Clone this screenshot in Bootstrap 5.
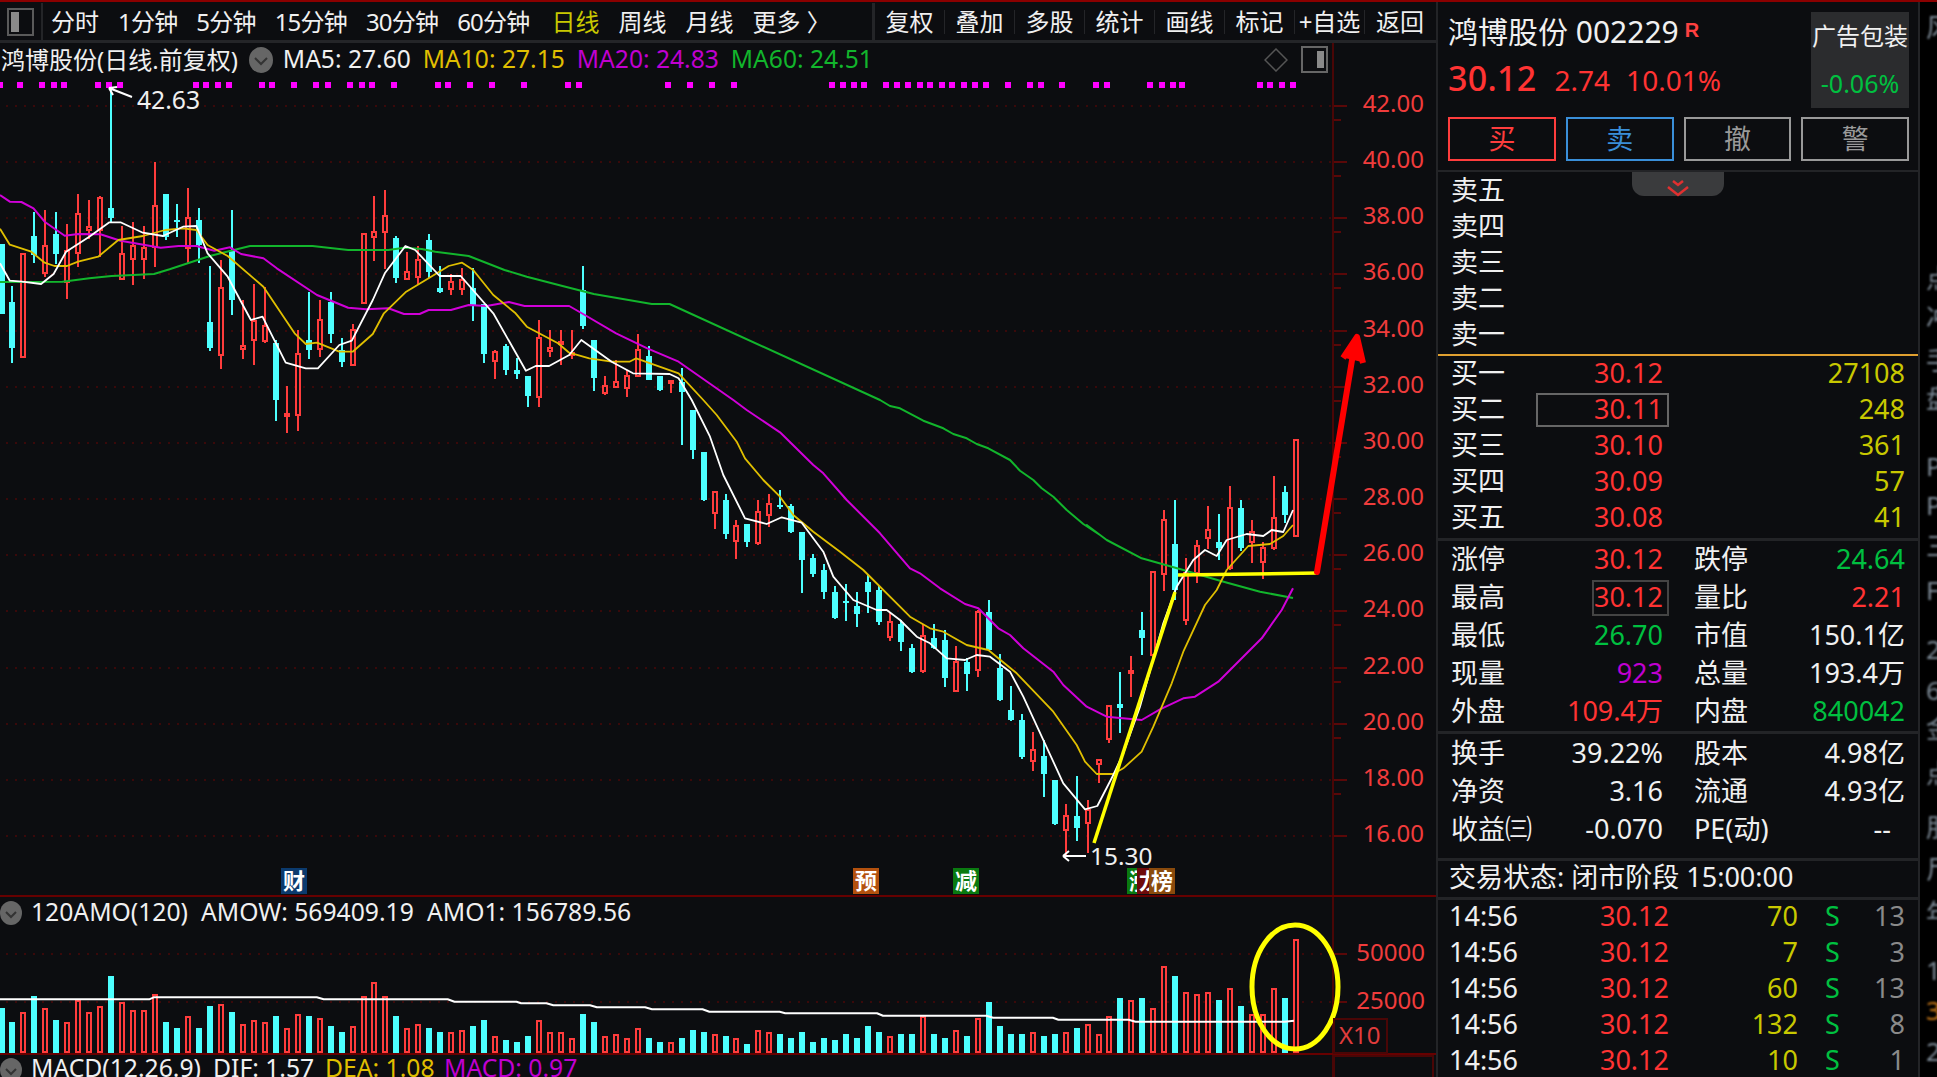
<!DOCTYPE html>
<html lang="zh">
<head>
<meta charset="utf-8">
<title>鸿博股份</title>
<link href="https://cdn.jsdelivr.net/npm/bootstrap@5.3.0/dist/css/bootstrap.min.css" rel="stylesheet">
<style>
html,body{margin:0;height:100%;background:#000;overflow:hidden}
body{font-family:"Noto Sans","Noto Sans CJK SC",sans-serif;color:#f0f0f0;font-size:24px;line-height:1}
.cjk-stage{width:1937px;height:1077px}
.topline{height:2px;background:#8b0000}
.left-pane{width:1436px;background:#0c0d10}
.right-pane{width:484px;background:#0c0d10;border-left:2px solid #232427;border-right:2px solid #232427}
.right-pane>*{flex:none}
.edge-strip{width:17px;background:#000;overflow:hidden;position:relative}
.edge-strip span{position:absolute;left:6px;font-size:26px;line-height:30px;color:#7d8a96;white-space:nowrap;filter:blur(.8px)}
.toolbar{height:41px;border-bottom:3px solid #242528;background:#0c0d10;padding-top:1px}
.tool-icon{width:43px;border-right:2px solid #242528;flex:none}
.tool-list{width:832px;flex:none;border-right:3px solid #242528;padding-left:8px}
.tool-list span{flex:none}
.tool-list .digit-item{letter-spacing:-.8px}
.tool-list .after-digits{margin-left:3px}
.tool-cell{width:70px;flex:none;border-right:1px solid #242528;text-align:center;white-space:nowrap}
.c-yellow{color:#c8c800}
.c-red{color:#ff3333}
.c-green{color:#00c040}
.c-mag{color:#c000d0}
.c-gold{color:#e0bf00}
.c-ma60{color:#12b52c}
.c-gray{color:#8a8a8a}
.infobar{height:33px;white-space:nowrap}
.info-inner{width:1334px;padding-left:1px;border-right:2px solid #4a0606}
.info-inner .tag{margin-right:12px;font-size:24.6px}
.chev{width:24px;height:26px;flex:none;margin:0 10px 0 11px}
.info-tools{gap:13px;padding-right:4px}
.stage-svg{display:block;width:1436px;height:1001px}
.stage-svg .hard{shape-rendering:crispEdges}
.stock-head{height:115px;padding:11px 0 0 10px;position:relative}
.stock-name{font-size:30px;line-height:34px;white-space:nowrap}
.stock-name b{font-size:20px;color:#ff4040;vertical-align:6px;margin-left:6px;font-family:"Liberation Sans",sans-serif}
.stock-price{margin-top:10px;line-height:38px;white-space:nowrap}
.price-big{font-size:34px;color:#ff3333;font-weight:500;margin-right:18px;letter-spacing:.3px}
.price-mid{font-size:28px;color:#ff3333;margin-right:16px}
.ad-box{position:absolute;right:9px;top:10px;width:98px;height:96px;background:#2b2c2e;text-align:center;padding-top:12px;white-space:nowrap;font-size:24px}
.ad-box div+div{margin-top:23px;font-size:25px}
.act-row{height:55px;padding:0 9px 0 10px;gap:10px;border-bottom:2px solid #232427}
.act-btn{width:108px;height:44px;border:2px solid #999;color:#999;background:transparent;font-size:27px;line-height:38px;text-align:center;border-radius:0;padding:0}
.act-btn.is-buy{border-color:#ff3d3d;color:#ff3d3d}
.act-btn.is-sell{border-color:#3a8fd9;color:#3a8fd9}
.ask-block{height:184px;border-bottom:2px solid #e0a030;padding-left:13px;position:relative}
.ask-row{height:36px;line-height:36px;font-size:27px}
.ask-tab{position:absolute;left:194px;top:0;width:92px;height:24px;background:#3a3b3d;border-radius:0 0 12px 12px;text-align:center}
.bid-block{height:185px;border-bottom:3px solid #232427;padding:0 13px 0 13px}
.bid-stack{margin-top:-1px}
.bid-line{display:grid;grid-template-columns:72px 140px 1fr;height:36px;line-height:36px;font-size:27px}
.bid-line>:nth-child(2),.bid-line>:nth-child(3){text-align:right}
.val-box{position:relative}
.val-box::after{content:"";position:absolute;border:2px solid #666;left:-2px;right:-6px;top:2px;bottom:0;pointer-events:none}
.val-box.wide::after{left:13px}
.stat-block{border-bottom:3px solid #232427;padding:0 13px 0 13px}
.stat-line{display:grid;grid-template-columns:72px 140px 31px 70px 1fr;height:38px;line-height:38px;font-size:27px}
.stat-line>:nth-child(2),.stat-line>:nth-child(5){text-align:right;white-space:nowrap}
.stat-line>:nth-child(1),.stat-line>:nth-child(4){white-space:nowrap}
.stat-a{height:193px}
.stat-stack{margin-top:-1px}
.stat-b{height:127px}
.status-bar{height:39px;line-height:32px;padding-left:11px;font-size:27px;border-bottom:3px solid #232427;white-space:nowrap}
.tick-wrap{margin-top:-2px}
.tick-line{display:grid;grid-template-columns:93px 127px 129px 43px 1fr;height:36px;line-height:36px;font-size:27px;padding:0 13px 0 11px}
.tick-line>:nth-child(2),.tick-line>:nth-child(3),.tick-line>:nth-child(5){text-align:right}
.tick-line>:nth-child(4){padding-left:27px}
.hl-box::after{border-color:#444}
.tiny-tile{font-family:"Noto Sans CJK SC",sans-serif;font-size:22px;fill:#fff;font-weight:700}
</style>
</head>
<body>
<div class="cjk-stage d-flex flex-column">
  <div class="topline"></div>
  <div class="d-flex flex-grow-1 overflow-hidden">
    <div class="left-pane flex-none">
      <div class="toolbar d-flex">
        <div class="tool-icon d-flex align-items-center justify-content-center">
          <svg width="27" height="28" viewBox="0 0 27 28"><rect x="1" y="1" width="25" height="26" fill="none" stroke="#5a5a5a" stroke-width="2"/><rect x="4" y="4" width="8" height="20" fill="#8a8a8a"/></svg>
        </div>
        <div class="tool-list d-flex align-items-center" style="gap:19px">
          <span>分时</span><span class="digit-item">1分钟</span><span class="digit-item">5分钟</span><span class="digit-item">15分钟</span><span class="digit-item">30分钟</span><span class="digit-item">60分钟</span><span class="c-yellow after-digits">日线</span><span>周线</span><span>月线</span><span>更多 〉</span>
        </div>
        <div class="d-flex">
          <div class="tool-cell align-self-center">复权</div><div class="tool-cell align-self-center">叠加</div><div class="tool-cell align-self-center">多股</div><div class="tool-cell align-self-center">统计</div><div class="tool-cell align-self-center">画线</div><div class="tool-cell align-self-center">标记</div><div class="tool-cell align-self-center">+自选</div><div class="tool-cell align-self-center border-0">返回</div>
        </div>
      </div>
      <div class="infobar d-flex">
        <div class="info-inner d-flex align-items-center">
          <span>鸿博股份(日线.前复权)</span>
          <svg class="chev" viewBox="0 0 24 26"><ellipse cx="12" cy="13" rx="12" ry="13" fill="#666"/><path d="M6 11l6 6 6-6" fill="none" stroke="#333" stroke-width="2"/></svg>
          <span class="tag">MA5: 27.60</span><span class="tag c-gold">MA10: 27.15</span><span class="tag c-mag">MA20: 24.83</span><span class="tag c-ma60">MA60: 24.51</span>
          <div class="info-tools ms-auto d-flex align-items-center">
            <svg width="24" height="24" viewBox="0 0 24 24"><path d="M12 1L23 12 12 23 1 12Z" fill="none" stroke="#555" stroke-width="1.5"/></svg>
            <svg width="27" height="27" viewBox="0 0 27 27"><rect x="1" y="1" width="25" height="25" fill="none" stroke="#666" stroke-width="2"/><rect x="16" y="5" width="7" height="17" fill="#8a8a8a"/></svg>
          </div>
        </div>
      </div>
      <svg class="stage-svg" id="stage" viewBox="0 76 1436 1001" xmlns="http://www.w3.org/2000/svg"></svg>
    </div>
    <div class="right-pane flex-none d-flex flex-column overflow-hidden">
      <div class="stock-head">
        <div class="stock-name">鸿博股份 002229<b>R</b></div>
        <div class="stock-price"><span class="price-big">30.12</span><span class="price-mid">2.74</span><span class="price-mid">10.01%</span></div>
        <div class="ad-box"><div>广告包装</div><div class="c-green">-0.06%</div></div>
      </div>
      <div class="act-row d-flex align-items-start">
        <button class="act-btn is-buy">买</button><button class="act-btn is-sell">卖</button><button class="act-btn">撤</button><button class="act-btn">警</button>
      </div>
      <div class="ask-block">
        <div class="ask-row">卖五</div><div class="ask-row">卖四</div><div class="ask-row">卖三</div><div class="ask-row">卖二</div><div class="ask-row">卖一</div>
        <div class="ask-tab"><svg width="30" height="22" viewBox="0 0 30 22"><path d="M10 5l5 4 5-4M5 11l10 8 10-8" fill="none" stroke="#e03030" stroke-width="2.5"/></svg></div>
      </div>
      <div class="bid-block">
        <div class="bid-stack">
        <div class="bid-line"><span>买一</span><span class="c-red">30.12</span><span class="c-yellow">27108</span></div>
        <div class="bid-line"><span>买二</span><span class="c-red val-box wide">30.11</span><span class="c-yellow">248</span></div>
        <div class="bid-line"><span>买三</span><span class="c-red">30.10</span><span class="c-yellow">361</span></div>
        <div class="bid-line"><span>买四</span><span class="c-red">30.09</span><span class="c-yellow">57</span></div>
        <div class="bid-line"><span>买五</span><span class="c-red">30.08</span><span class="c-yellow">41</span></div>
        </div>
      </div>
      <div class="stat-block stat-a">
        <div class="stat-stack">
        <div class="stat-line"><span>涨停</span><span class="c-red">30.12</span><span></span><span>跌停</span><span class="c-green">24.64</span></div>
        <div class="stat-line"><span>最高</span><span class="c-red"><span class="val-box hl-box d-inline-block">30.12</span></span><span></span><span>量比</span><span class="c-red">2.21</span></div>
        <div class="stat-line"><span>最低</span><span class="c-green">26.70</span><span></span><span>市值</span><span>150.1亿</span></div>
        <div class="stat-line"><span>现量</span><span class="c-mag">923</span><span></span><span>总量</span><span>193.4万</span></div>
        <div class="stat-line"><span>外盘</span><span class="c-red">109.4万</span><span></span><span>内盘</span><span class="c-green">840042</span></div>
        </div>
      </div>
      <div class="stat-block stat-b">
        <div class="stat-line"><span>换手</span><span>39.22%</span><span></span><span>股本</span><span>4.98亿</span></div>
        <div class="stat-line"><span>净资</span><span>3.16</span><span></span><span>流通</span><span>4.93亿</span></div>
        <div class="stat-line"><span>收益㈢</span><span>-0.070</span><span></span><span>PE(动)</span><span>--&nbsp;&nbsp;</span></div>
      </div>
      <div class="status-bar">交易状态: 闭市阶段 15:00:00</div>
      <div class="tick-wrap">
        <div class="tick-line"><span>14:56</span><span class="c-red">30.12</span><span class="c-yellow">70</span><span class="c-green">S</span><span class="c-gray">13</span></div>
        <div class="tick-line"><span>14:56</span><span class="c-red">30.12</span><span class="c-yellow">7</span><span class="c-green">S</span><span class="c-gray">3</span></div>
        <div class="tick-line"><span>14:56</span><span class="c-red">30.12</span><span class="c-yellow">60</span><span class="c-green">S</span><span class="c-gray">13</span></div>
        <div class="tick-line"><span>14:56</span><span class="c-red">30.12</span><span class="c-yellow">132</span><span class="c-green">S</span><span class="c-gray">8</span></div>
        <div class="tick-line"><span>14:56</span><span class="c-red">30.12</span><span class="c-yellow">10</span><span class="c-green">S</span><span class="c-gray">1</span></div>
      </div>
    </div>
    <div class="edge-strip flex-none" id="edge"></div>
  </div>
</div>
<script>
(function(){
var STEP=10.97, RED='#ff3c3c', CY='#4dffff';
var z8y=function(y){return 180+y/3}, z9y=function(y){return 400+y/3}, z10y=function(y){return 460+y/3};
var a8=[['c',192,192,402,402],['c',318,366,504,548],['r',222,222,530,530],['c',96,168,226,248],['r',90,198,278,290],['c',96,162,222,252],['r',132,212,306,356],['r',42,102,218,260],['r',60,142,152,178],['r',48,54,150,230],['c',-279,84,114,125],['r',138,222,296,296],['r',126,198,236,316],['r',138,204,236,296],['r',-54,78,200,260],['c',42,42,170,180],['c',72,120,122,170],['r',24,114,205,250],['c',84,120,196,248],['c',258,426,504,512],['r',240,324,524,566],['c',90,210,360,404],['r',360,498,506,536],['r',312,424,482,554],['r',320,438,484,490],['c',480,490,660,722],['r',618,702,705,758],['r',450,522,704,752],['c',336,480,510,536],['r',360,420,506,530],['c',336,366,462,490],['c',474,510,546,560],['r',432,450,554,554],['r',162,162,368,368],['r',48,156,170,242],['r',30,108,156,266],['c',168,174,294,308],['r',216,276,296,296],['r',198,240,290,312],['c',162,180,276,294],['c',258,324,336,338],['r',282,306,326,344],['r',264,300,326,344],['c',264,324,374,422],['c',372,372,522,548],['r',510,516,542,596],['c',492,498,570,584],['c',534,570,582,596],['c',588,588,648,680],['r',420,474,650,680],['r',450,504,512,530],['r',450,486,490,554],['r',450,520,524,536],['c',258,330,438,446],['c',480,480,594,632],['r',588,618,638,644],['r',540,606,620,620],['r',570,588,624,650],['r',462,510,588,590],['c',498,528,600,600],['c',588,588,630,632],['r',600,604,607,638],['c',564,606,636,794],['c',690,690,810,838]];
var a9=[['c',156,156,300,302],['r',272,275,337,386],['c',282,300,402,416],['r',360,378,422,476],['c',372,372,426,440],['r',300,336,430,434],['r',282,312,344,380],['c',270,314,317,326],['c',312,318,396,398],['c',396,396,480,578],['c',462,474,522,530],['c',492,510,576,596],['c',558,576,654,656],['c',552,602,605,662],['c',576,618,642,680],['c',522,546,576,638],['c',558,570,666,674],['r',636,666,710,722],['c',660,672,726,752],['c',732,744,816,818],['r',672,708,812,818],['c',672,714,744,746],['c',690,720,834,860],['r',738,786,872,872],['c',774,786,822,872],['r',630,636,810,830],['c',600,636,750,750],['c',762,804,900,902],['c',858,930,960,962],['c',942,960,1070,1076],['r',996,1050,1082,1112],['c',1020,1068,1122,1190],['c',1140,1140,1272,1274],['r',1212,1248,1290,1368],['c',1128,1248,1284,1322],['r',1200,1230,1268,1358]];
var a10=[['r',898,900,912,968],['r',737,737,836,848],['c',636,732,744,818],['r',588,634,638,710],['c',456,510,534,584],['r',336,336,586,590],['r',150,180,342,392],['c',120,252,390,420],['r',294,340,482,494],['r',240,258,340,368],['r',138,210,234,266],['c',162,246,264,300],['r',78,144,324,330],['c',120,144,264,272],['r',180,216,246,308],['r',246,264,306,356],['r',48,174,264,270],['c',78,96,166,188],['r',-60,-60,228,230]];
var all=[];
a8.forEach(function(d){all.push([d[0],z8y(d[1]),z8y(d[2]),z8y(d[3]),z8y(d[4])])});
a9.forEach(function(d){all.push([d[0],z9y(d[1]),z9y(d[2]),z9y(d[3]),z9y(d[4])])});
a10.forEach(function(d){all.push([d[0],z10y(d[1]),z10y(d[2]),z10y(d[3]),z10y(d[4])])});
var vols='c384 c426 r400 c348 r388 c420 r430 r364 r400 r382 c288 r370 r394 r394 r346 c426 c444 r412 c444 c378 r376 c396 r436 r424 r430 c408 r448 r406 c408 r418 c438 c456 r442 r352 r310 r352 c408 r448 r436 c444 c456 r460 r454 c438 c420 r472 c480 c486 c468 r424 r460 r460 r478 c402 c426 r472 r466 r478 r448 c474 c486 r490 c474 c450 c456 r466 c468 r478 c492 r454 r460 c462 c474 c456 c486 c474 c480 c462 c474 c438 c456 r472 c462 c462 r412 c462 c474 r454 c468 r418 c366 c438 c462 c462 r460 c468 c462 r460 c444 r436 r466 r412 c354 r364 c354 r388 r262 c288 r340 r346 r340 c360 r328 c378 r406 r406 r328 c354 r180'.split(' ');
function pts(list,fx,fy){return list.map(function(p){return fx(p[0]).toFixed(1)+','+fy(p[1]).toFixed(1)}).join(' ')}
var f8=function(x){return x/2.24},f9=function(x){return 650+x/3},f10=function(x){return 1050+x/3};
function ma(l8,l9,l10){return pts(l8,f8,z8y)+' '+pts(l9,f9,z9y)+' '+pts(l10,f10,z10y)}
var mw=ma([[0,250],[22,302],[50,305],[92,312],[120,282],[148,215],[200,170],[245,127],[270,127],[320,158],[365,168],[410,140],[440,138],[465,220],[510,290],[540,365],[562,420],[588,410],[640,548],[685,565],[712,565],[760,495],[788,482],[835,360],[862,280],[908,198],[930,210],[985,288],[1032,288],[1105,400],[1178,572],[1200,558],[1230,558],[1275,525],[1302,480],[1370,545],[1418,580],[1500,582],[1520,595]],
 [[125,0],[180,110],[220,225],[285,355],[350,372],[395,352],[455,368],[520,455],[550,530],[610,600],[680,630],[710,630],[750,660],[800,710],[840,730],[890,775],[945,780],[980,765],[1020,770],[1080,815],[1120,890],[1240,1150],[1305,1228]],
 [[105,1048],[142,1038],[190,945],[220,880],[270,740],[340,490],[380,380],[430,300],[465,270],[500,288],[530,240],[590,222],[640,228],[665,210],[700,216],[729,150]]);
var mg=ma([[0,146],[22,194],[70,215],[100,248],[122,258],[150,258],[175,245],[220,230],[265,180],[320,168],[370,150],[410,145],[440,150],[465,195],[510,228],[590,320],[660,460],[685,492],[710,488],[760,515],[790,515],[835,462],[860,400],[910,335],[960,295],[1005,258],[1035,248],[1060,270],[1105,345],[1155,400],[1180,440],[1250,490],[1275,518],[1320,535],[1370,545],[1410,545],[1425,535],[1520,580]],
 [[160,0],[200,45],[260,125],[285,175],[340,240],[390,290],[430,345],[490,395],[570,455],[640,510],[780,650],[840,685],[880,695],[950,735],[1015,750],[1100,820],[1210,935],[1280,1035],[1305,1085]],
 [[140,942],[190,942],[220,925],[275,875],[310,800],[365,670],[400,575],[465,435],[500,390],[530,330],[595,258],[660,252],[700,228],[729,195]]);
var mm=ma([[0,45],[22,65],[48,66],[75,85],[100,125],[145,167],[175,162],[225,163],[270,182],[360,203],[400,198],[440,198],[480,212],[515,202],[540,222],[590,235],[620,265],[710,345],[780,383],[820,388],[870,385],[905,402],[940,402],[960,390],[1010,390],[1050,375],[1090,378],[1140,366],[1175,378],[1275,378],[1310,405],[1380,460],[1450,505],[1520,545]],
 [[250,0],[290,30],[390,97],[490,195],[520,220],[590,300],[690,400],[780,505],[810,520],[870,565],[945,612],[985,625],[1045,685],[1080,705],[1120,745],[1210,815],[1240,855],[1310,920]],
 [[110,740],[170,770],[275,780],[330,748],[400,715],[435,710],[505,665],[635,535],[695,450],[729,385]]);
var m6=ma([[0,306],[140,305],[200,295],[250,288],[345,282],[380,268],[470,228],[560,198],[700,198],[780,210],[870,210],[905,203],[945,207],[975,215],[1050,228],[1130,270],[1180,290],[1260,318],[1330,342],[1460,372],[1500,372]],
 [[690,0],[720,18],[750,25],[820,62],[880,85],[910,102],[950,115],[980,132],[1015,145],[1080,180],[1110,212],[1150,240],[1175,265],[1210,290],[1250,330],[1300,372],[1350,405]],
 [[110,195],[170,240],[275,295],[400,330],[510,362],[630,395],[729,414]]);
var s='';
function line(x1,y1,x2,y2,c,w,extra){return '<line x1="'+x1+'" y1="'+y1+'" x2="'+x2+'" y2="'+y2+'" stroke="'+c+'" stroke-width="'+w+'"'+(extra||'')+'/>'}
for(var p=42;p>=16;p-=2){var y=Math.round(106+(42-p)*28.08);
 s+=line(6,y,1332,y,'#4a0808',1.5,' stroke-dasharray="2 7"');
 s+=line(1334,y,1347,y,'#5a0808',2);
 s+='<text x="1424" y="'+(y+6)+'" text-anchor="end" fill="#f03c3c" font-size="24">'+p+'.00</text>';
 if(p>16){var ym=y+14;s+=line(1334,ym,1341,ym,'#5a0808',2);}
}
[954,1002].forEach(function(y,i){s+=line(6,y,1332,y,'#4a0808',1.5,' stroke-dasharray="2 7"');s+=line(1334,y,1347,y,'#5a0808',2);s+='<text x="1425" y="'+(y+7)+'" text-anchor="end" fill="#f03c3c" font-size="24">'+(i?'25000':'50000')+'</text>'});
s+=line(1333,76,1333,1077,'#4a0606',2);
s+=line(0,896,1436,896,'#600',2);
s+=line(0,1054,1436,1054,'#600',2);
var dx=[0,45,94,120,144,220,244,268,438,462,488,512,586,610,658,708,734,784,810,834,882,981,1004,1052,1102,1174,1273,1298,1497,1545].map(function(x){return x/2.24});
dx=dx.concat([25,72,279,303,327,348,394,418,441,466,488,512,534,559,582,606,653,699,722,768,839,862,953,979,1003,1022,1186,1208,1233,1256].map(function(x){return 700+x/2.119}));
dx.forEach(function(x){s+='<rect x="'+(x-3).toFixed(0)+'" y="82" width="6" height="6" fill="#ff00ff"/>'});
s+='<g class="hard">';
all.forEach(function(d,i){var x=Math.round(i*STEP+0.5),c=d[0]=='c'?CY:RED;
 s+=line(x+1,d[1].toFixed(0),x+1,d[4].toFixed(0),c,2);
 var h=Math.max(d[3]-d[2],2);
 if(d[0]=='c'){s+='<rect x="'+(x-2)+'" y="'+d[2].toFixed(0)+'" width="6" height="'+h.toFixed(0)+'" fill="'+c+'"/>'}
 else{s+='<rect x="'+(x-1)+'" y="'+d[2].toFixed(0)+'" width="4" height="'+h.toFixed(0)+'" fill="#0c0d10" stroke="'+c+'" stroke-width="2"/>'}
});
s+='</g>';
function poly(p,c,w){return '<polyline points="'+p+'" fill="none" stroke="'+c+'" stroke-width="'+w+'" stroke-linejoin="round"/>'}
s+=poly(m6,'#12b52c',2)+poly(mm,'#d000d8',2)+poly(mg,'#e0bf00',1.8)+poly(mw,'#ffffff',1.8);
s+='<polyline points="1094,843 1175,592" fill="none" stroke="#ffff00" stroke-width="3.5"/>';
s+='<line x1="1178" y1="575" x2="1318" y2="573" stroke="#ffff00" stroke-width="3.5"/>';
s+='<line x1="1317" y1="572" x2="1355" y2="342" stroke="#ff0000" stroke-width="6" stroke-linecap="round"/>';
s+='<polyline points="1343,358 1357,337 1363,363" fill="none" stroke="#ff0000" stroke-width="6" stroke-linejoin="round"/><polygon points="1345,358 1357,337 1362,362" fill="#ff0000"/>';
s+='<path d="M132 97 L109 88 M109 88 L117 87 M109 88 L113 95" stroke="#fff" stroke-width="2" fill="none"/>';
s+='<text x="137" y="109" fill="#f0f0f0" font-size="24.7">42.63</text>';
s+='<path d="M1086 856 L1063 856 M1063 856 L1069 851 M1063 856 L1069 861" stroke="#fff" stroke-width="2" fill="none"/>';
s+='<text x="1090" y="865" fill="#f0f0f0" font-size="24.4">15.30</text>';
[[281,'#0b3a6e','财'],[853,'#b4510e','预'],[953,'#0a7a10','减'],[1127,'#0a7a10','涨'],[1137,'#6e0a0a','龙'],[1149,'#8a4a0c','榜']].forEach(function(t){
 s+='<rect x="'+t[0]+'" y="868" width="26" height="26" fill="'+t[1]+'"/><text class="tiny-tile" x="'+(t[0]+2)+'" y="889">'+t[2]+'</text>';
});
s+='<g class="hard">';
vols.forEach(function(v,i){var c=v[0]=='c'?CY:RED,top=880+parseInt(v.slice(1))/3,x=Math.round(i*STEP+0.5);
 if(v[0]=='c')s+='<rect x="'+(x-2)+'" y="'+top.toFixed(0)+'" width="6" height="'+(1053-top).toFixed(0)+'" fill="'+c+'"/>';
 else s+='<rect x="'+(x-1)+'" y="'+top.toFixed(0)+'" width="4" height="'+(1052-top).toFixed(0)+'" fill="#0c0d10" stroke="'+c+'" stroke-width="2"/>';
});
s+='</g>';
var vw=pts([[0,358],[325,358],[335,352],[690,352],[705,358],[975,358],[990,365],[1125,365],[1135,370],[1190,370],[1205,376],[1285,376],[1300,382],[1405,382],[1420,388],[1530,388],[1545,395]],function(x){return x/2.178},function(y){return 880+y/3})+' '+pts([[0,395],[130,395],[142,400],[342,400],[355,407],[580,407],[595,413],[725,413],[737,419],[890,419],[905,425],[1230,425],[1250,422]],function(x){return 720+x/2.178},function(y){return 880+y/3});
s+=poly(vw,'#ffffff',2);
s+='<ellipse cx="1295" cy="987" rx="43" ry="62" fill="none" stroke="#ffff00" stroke-width="5"/>';
s+='<ellipse cx="11" cy="913" rx="11" ry="12" fill="#666"/><path d="M6 912l5 5 5-5" fill="none" stroke="#333" stroke-width="2"/>';
s+='<text x="31" y="921" fill="#f0f0f0" font-size="24.7">120AMO(120)</text><text x="201" y="921" fill="#f0f0f0" font-size="24.7">AMOW: 569409.19</text><text x="427" y="921" fill="#f0f0f0" font-size="24.7">AMO1: 156789.56</text>';
s+='<ellipse cx="11" cy="1070" rx="11" ry="12" fill="#666"/><path d="M6 1069l5 5 5-5" fill="none" stroke="#333" stroke-width="2"/>';
s+='<text x="31" y="1077" fill="#f0f0f0" font-size="24.7">MACD(12.26.9)</text><text x="213" y="1077" fill="#f0f0f0" font-size="24.7">DIF: 1.57</text><text x="325" y="1077" fill="#e0bf00" font-size="24.7">DEA: 1.08</text><text x="444" y="1077" fill="#c000d0" font-size="24.7">MACD: 0.97</text>';
s+='<rect x="1334" y="1019" width="53" height="34" fill="none" stroke="#4a0606" stroke-width="2"/><text x="1339" y="1044" fill="#e03c3c" font-size="24">X10</text>';
s+='<rect x="1334" y="1056" width="99" height="30" fill="none" stroke="#4a0606" stroke-width="2"/>';
document.getElementById('stage').innerHTML=s;
var edge=[['风',12],['点',263],['冲',302],['手',345],['盘',383],['P',451],['P',490],['三',531],['F',575],['2',634],['6',675],['金',713],['点',758],['朋',812],['尸',854],['年',898],['1',955],['3',995,'#c87818'],['2',1036]];
var h='';edge.forEach(function(e){h+='<span style="top:'+(e[1]-2)+'px'+(e[2]?';color:'+e[2]:'')+'">'+e[0]+'</span>'});
document.getElementById('edge').innerHTML=h;
})();
</script>
<script src="https://cdn.jsdelivr.net/npm/bootstrap@5.3.0/dist/js/bootstrap.bundle.min.js"></script>
</body>
</html>
